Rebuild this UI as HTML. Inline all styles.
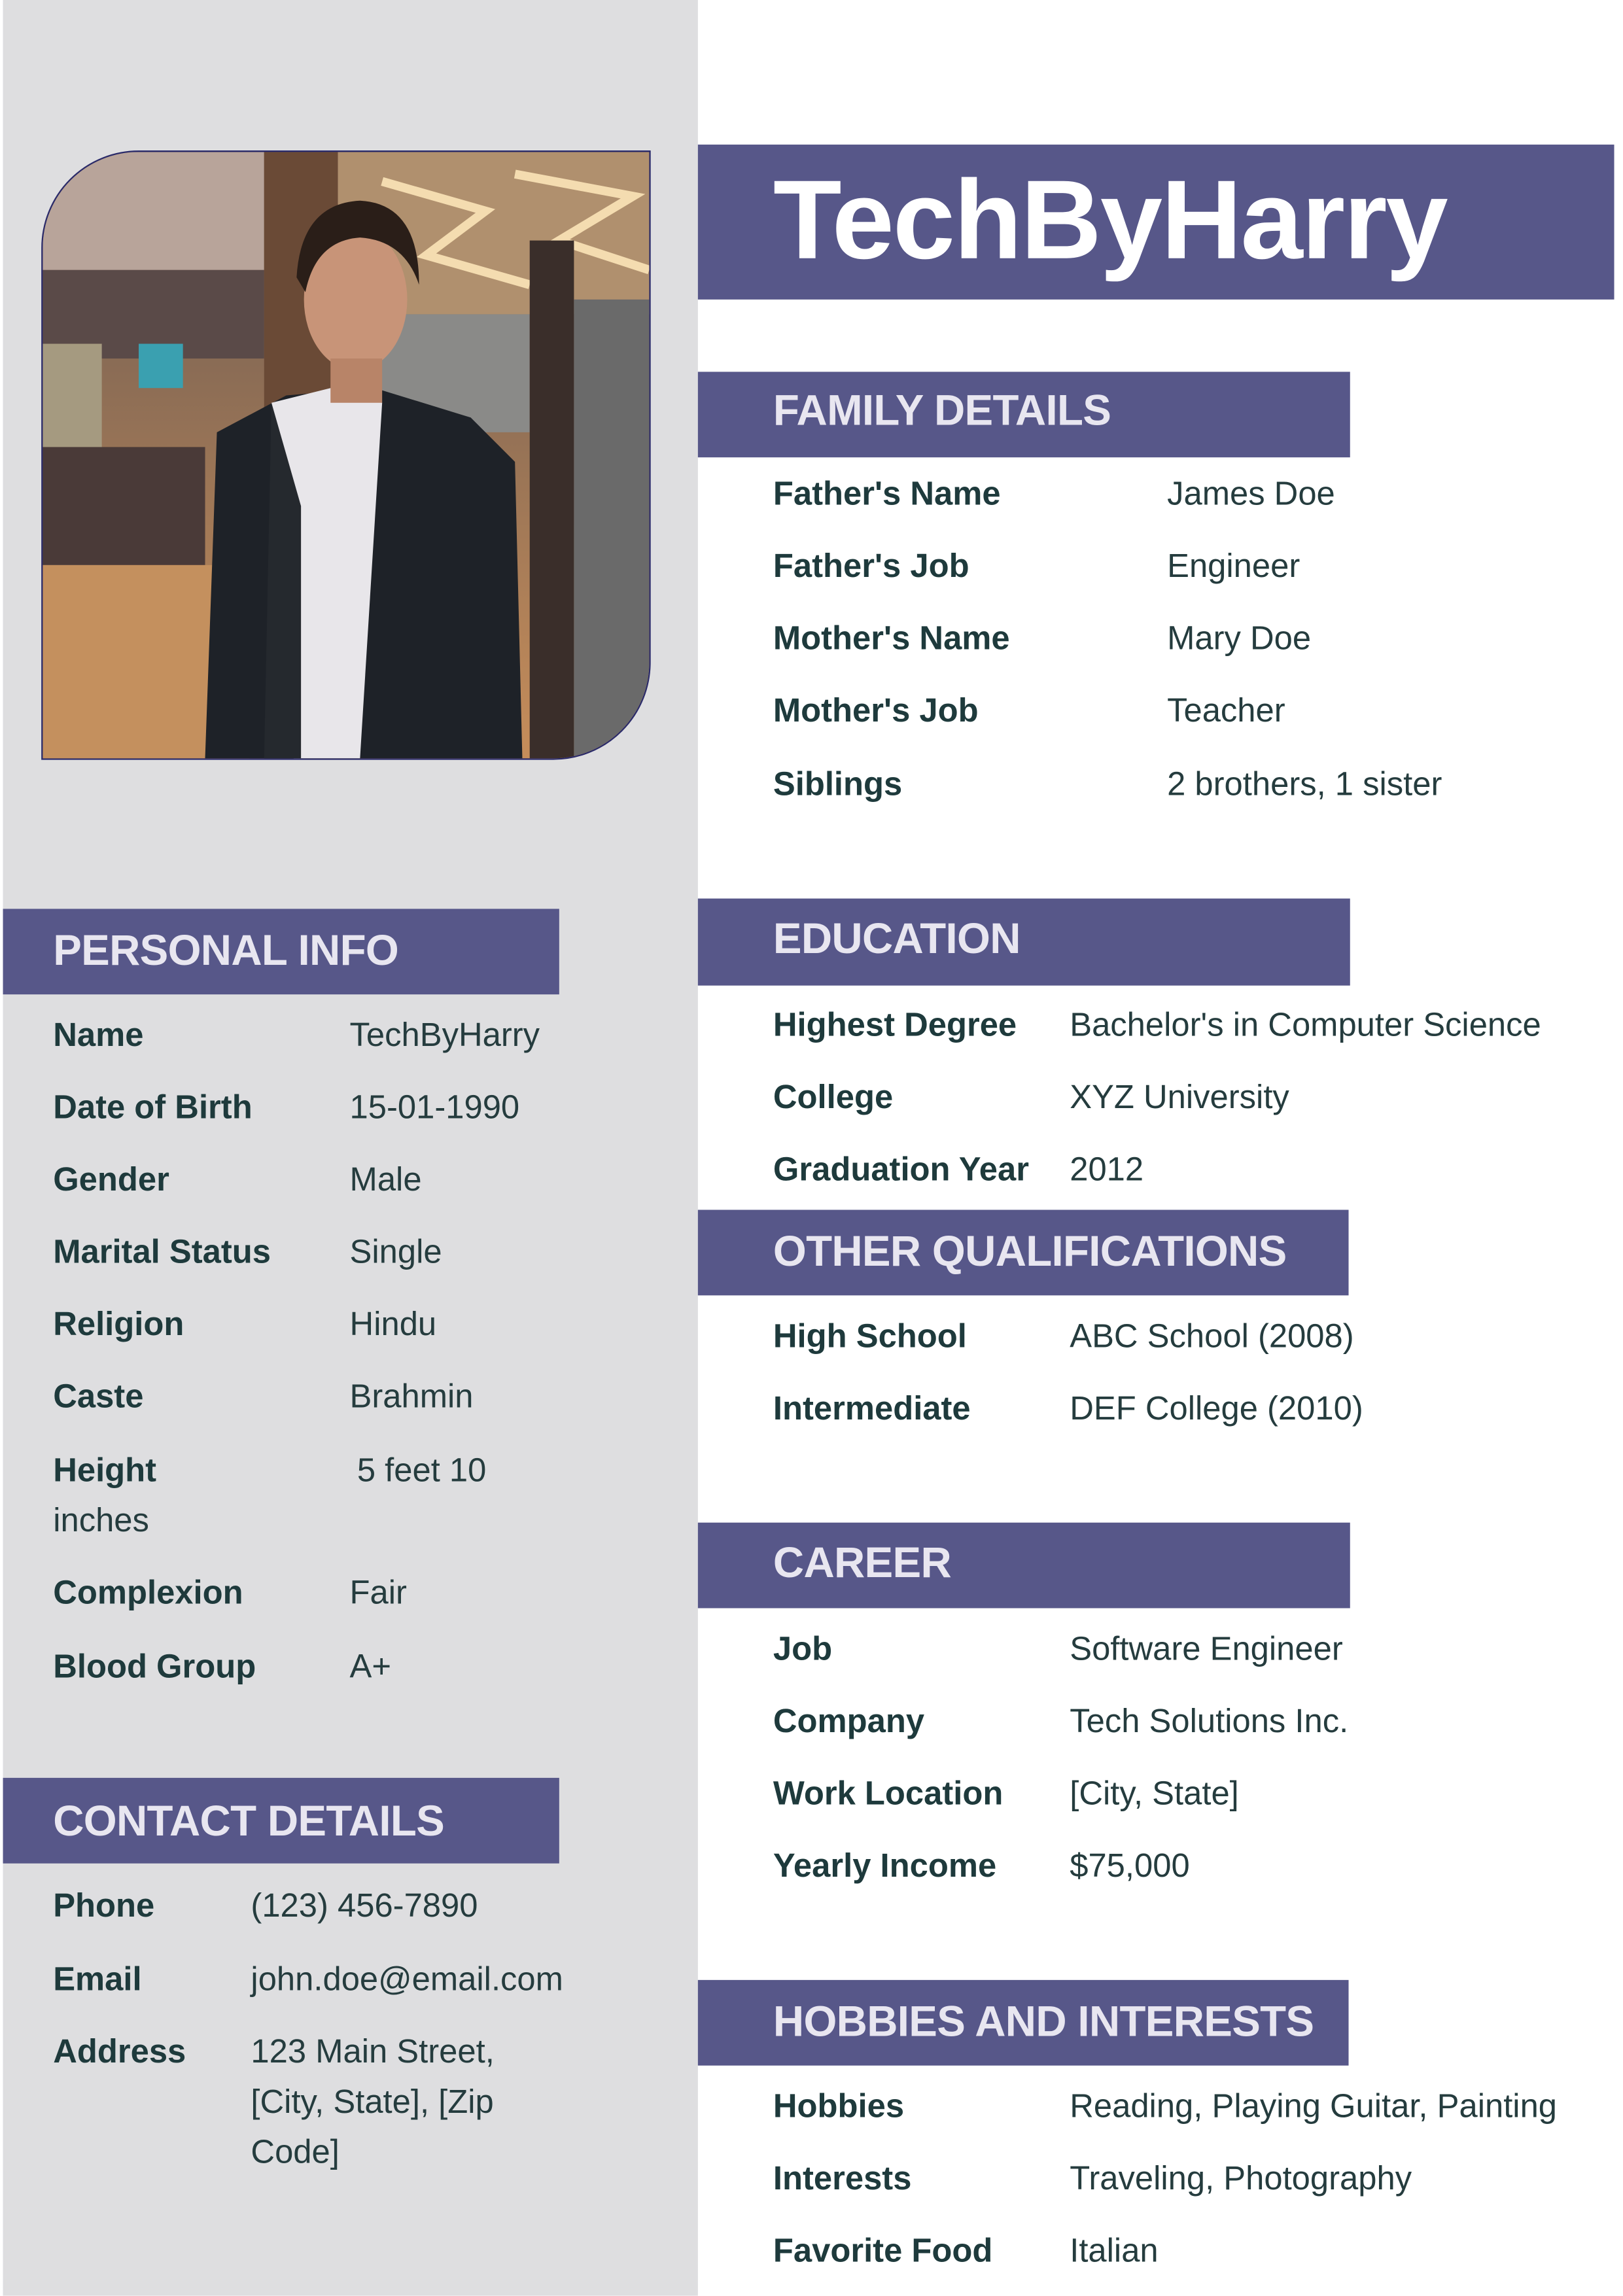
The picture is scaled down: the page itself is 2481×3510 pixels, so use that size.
<!DOCTYPE html>
<html><head><meta charset="utf-8"><style>
html,body{margin:0;padding:0;background:#fff;}
body{width:2481px;height:3510px;overflow:hidden;position:relative;}
#w{position:absolute;left:0;top:0;width:1100px;height:1556px;transform:scale(2.2555);transform-origin:0 0;font-family:"Liberation Sans",sans-serif;}
.side{position:absolute;left:2px;top:0;width:471px;height:1556px;background:#dedee0;}
.bar{position:absolute;background:#575789;}
.h{position:absolute;color:#e8e6f0;font-weight:bold;font-size:29px;line-height:34px;letter-spacing:-0.3px;white-space:nowrap;}
.l,.v{position:absolute;font-size:22.5px;line-height:30px;white-space:nowrap;color:#1e3a3c;}
.l{font-weight:bold;}
.v{color:#253c3e;}
</style></head><body><div id="w">
<div class="side"></div>

<div style="position:absolute;left:28px;top:102px;width:411px;height:411px;border:1.5px solid #2a2a6a;border-radius:66px 0 66px 0;overflow:hidden;background:#7a6a5e;">
<svg width="411" height="411" viewBox="0 0 411 411">
<defs><linearGradient id="fl" x1="0" y1="0" x2="0" y2="1"><stop offset="0" stop-color="#6a5a52"/><stop offset="1" stop-color="#c68d5a"/></linearGradient></defs>
<rect width="411" height="411" fill="url(#fl)"/>
<rect x="0" y="0" width="150" height="80" fill="#b8a49a"/>
<rect x="0" y="80" width="150" height="60" fill="#5a4a48"/>
<rect x="0" y="130" width="40" height="150" fill="#a59a80"/>
<rect x="65" y="130" width="30" height="30" fill="#3aa0b0"/>
<rect x="0" y="200" width="110" height="80" fill="#4a3a38"/>
<rect x="0" y="280" width="140" height="131" fill="#c4905e"/>
<rect x="150" y="0" width="50" height="180" fill="#6a4a36"/>
<rect x="200" y="0" width="211" height="110" fill="#b0906e"/>
<g stroke="#f4dcb0" stroke-width="6" fill="none"><path d="M230 20 L300 40 L260 70 L330 90"/><path d="M320 15 L400 30 L350 60 L411 80"/></g>
<rect x="200" y="110" width="130" height="80" fill="#8a8a88"/>
<rect x="330" y="60" width="30" height="351" fill="#3a2e2a"/>
<rect x="360" y="100" width="51" height="311" fill="#6a6a6a"/>
<path d="M110 411 L118 190 L165 165 L225 160 L290 180 L320 210 L325 411 Z" fill="#1e2228"/>
<path d="M155 170 L195 160 L230 170 L215 411 L170 411 Z" fill="#e8e6ea"/>
<path d="M155 170 L175 240 L175 411 L150 411 Z" fill="#25292e"/>
<ellipse cx="212" cy="100" rx="35" ry="48" fill="#c89478"/>
<path d="M172 85 Q175 35 215 33 Q255 35 255 90 Q245 60 215 58 Q185 60 178 95 Z" fill="#2a1e18"/>
<rect x="195" y="140" width="35" height="30" fill="#b88468"/>
</svg></div>

<div class="bar" style="left:473px;top:98px;width:621px;height:105px;"></div>
<div style="position:absolute;left:524px;top:105px;color:#fff;font-weight:bold;font-size:76px;line-height:90px;letter-spacing:-1px;">TechByHarry</div>

<!-- Family -->
<div class="bar" style="left:473px;top:252px;width:442px;height:58px;"></div>
<div class="h" style="left:524px;top:262px;">FAMILY DETAILS</div>
<div class="l" style="left:524px;top:320px;">Father's Name</div><div class="v" style="left:791px;top:320px;">James Doe</div>
<div class="l" style="left:524px;top:369px;">Father's Job</div><div class="v" style="left:791px;top:369px;">Engineer</div>
<div class="l" style="left:524px;top:418px;">Mother's Name</div><div class="v" style="left:791px;top:418px;">Mary Doe</div>
<div class="l" style="left:524px;top:467px;">Mother's Job</div><div class="v" style="left:791px;top:467px;">Teacher</div>
<div class="l" style="left:524px;top:517px;">Siblings</div><div class="v" style="left:791px;top:517px;">2 brothers, 1 sister</div>

<!-- Education -->
<div class="bar" style="left:473px;top:609px;width:442px;height:59px;"></div>
<div class="h" style="left:524px;top:620px;">EDUCATION</div>
<div class="l" style="left:524px;top:680px;">Highest Degree</div><div class="v" style="left:725px;top:680px;">Bachelor's in Computer Science</div>
<div class="l" style="left:524px;top:729px;">College</div><div class="v" style="left:725px;top:729px;">XYZ University</div>
<div class="l" style="left:524px;top:778px;">Graduation Year</div><div class="v" style="left:725px;top:778px;">2012</div>

<div class="bar" style="left:473px;top:820px;width:441px;height:58px;"></div>
<div class="h" style="left:524px;top:832px;">OTHER QUALIFICATIONS</div>
<div class="l" style="left:524px;top:891px;">High School</div><div class="v" style="left:725px;top:891px;">ABC School (2008)</div>
<div class="l" style="left:524px;top:940px;">Intermediate</div><div class="v" style="left:725px;top:940px;">DEF College (2010)</div>

<div class="bar" style="left:473px;top:1032px;width:442px;height:58px;"></div>
<div class="h" style="left:524px;top:1043px;">CAREER</div>
<div class="l" style="left:524px;top:1103px;">Job</div><div class="v" style="left:725px;top:1103px;">Software Engineer</div>
<div class="l" style="left:524px;top:1152px;">Company</div><div class="v" style="left:725px;top:1152px;">Tech Solutions Inc.</div>
<div class="l" style="left:524px;top:1201px;">Work Location</div><div class="v" style="left:725px;top:1201px;">[City, State]</div>
<div class="l" style="left:524px;top:1250px;">Yearly Income</div><div class="v" style="left:725px;top:1250px;">$75,000</div>

<div class="bar" style="left:473px;top:1342px;width:441px;height:58px;"></div>
<div class="h" style="left:524px;top:1354px;">HOBBIES AND INTERESTS</div>
<div class="l" style="left:524px;top:1413px;">Hobbies</div><div class="v" style="left:725px;top:1413px;">Reading, Playing Guitar, Painting</div>
<div class="l" style="left:524px;top:1462px;">Interests</div><div class="v" style="left:725px;top:1462px;">Traveling, Photography</div>
<div class="l" style="left:524px;top:1511px;">Favorite Food</div><div class="v" style="left:725px;top:1511px;">Italian</div>

<!-- Personal -->
<div class="bar" style="left:2px;top:616px;width:377px;height:58px;"></div>
<div class="h" style="left:36px;top:628px;">PERSONAL INFO</div>
<div class="l" style="left:36px;top:687px;">Name</div><div class="v" style="left:237px;top:687px;">TechByHarry</div>
<div class="l" style="left:36px;top:736px;">Date of Birth</div><div class="v" style="left:237px;top:736px;">15-01-1990</div>
<div class="l" style="left:36px;top:785px;">Gender</div><div class="v" style="left:237px;top:785px;">Male</div>
<div class="l" style="left:36px;top:834px;">Marital Status</div><div class="v" style="left:237px;top:834px;">Single</div>
<div class="l" style="left:36px;top:883px;">Religion</div><div class="v" style="left:237px;top:883px;">Hindu</div>
<div class="l" style="left:36px;top:932px;">Caste</div><div class="v" style="left:237px;top:932px;">Brahmin</div>
<div class="l" style="left:36px;top:982px;">Height</div><div class="v" style="left:242px;top:982px;">5 feet 10</div>
<div class="v" style="left:36px;top:1016px;">inches</div>
<div class="l" style="left:36px;top:1065px;">Complexion</div><div class="v" style="left:237px;top:1065px;">Fair</div>
<div class="l" style="left:36px;top:1115px;">Blood Group</div><div class="v" style="left:237px;top:1115px;">A+</div>

<!-- Contact -->
<div class="bar" style="left:2px;top:1205px;width:377px;height:58px;"></div>
<div class="h" style="left:36px;top:1218px;">CONTACT DETAILS</div>
<div class="l" style="left:36px;top:1277px;">Phone</div><div class="v" style="left:170px;top:1277px;">(123) 456-7890</div>
<div class="l" style="left:36px;top:1327px;">Email</div><div class="v" style="left:170px;top:1327px;">john.doe@email.com</div>
<div class="l" style="left:36px;top:1376px;">Address</div><div class="v" style="left:170px;top:1376px;">123 Main Street,</div>
<div class="v" style="left:170px;top:1410px;">[City, State], [Zip</div>
<div class="v" style="left:170px;top:1444px;">Code]</div>
</div></body></html>
